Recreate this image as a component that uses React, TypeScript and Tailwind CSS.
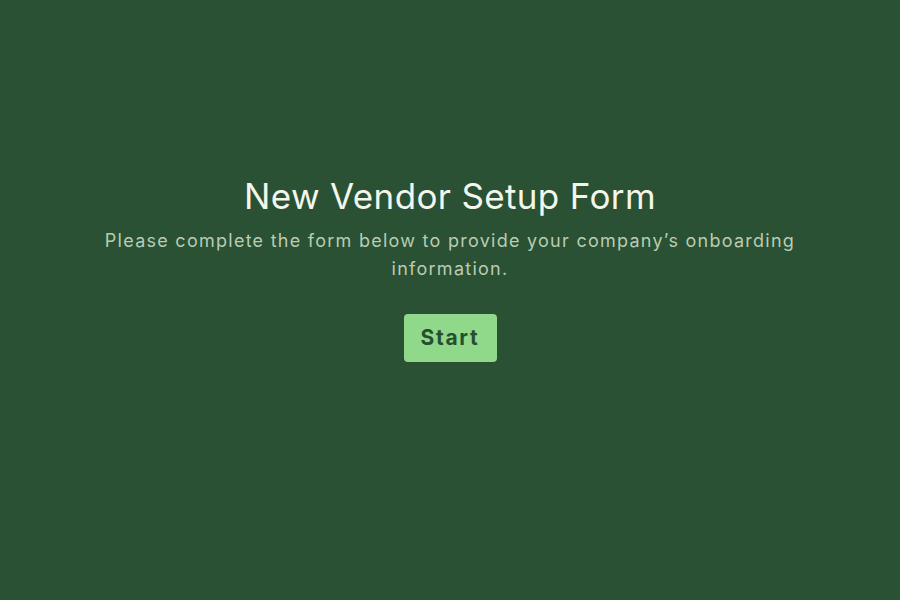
export default function App() {
  return (
    <div
      className="min-h-screen w-full bg-[#2a5133] flex flex-col items-center pt-[174px] px-8"
      style={{ fontFamily: 'Inter, "Noto Sans", sans-serif' }}
    >
      <h1 className="text-[35px] leading-[44px] font-normal tracking-[0.01em] text-[#f2f6ec] text-center">
        New Vendor Setup Form
      </h1>
      <p className="mt-[9px] max-w-[740px] text-[18px] leading-[28px] tracking-[0.07em] text-[#b9ccb3] text-center">
        Please complete the form below to provide your company’s onboarding information.
      </p>
      <button className="mt-[31px] h-[48px] w-[93px] rounded-[4px] bg-[#90d98a] text-[#25502f] text-[21px] font-bold tracking-[0.08em]">
        Start
      </button>
    </div>
  )
}
